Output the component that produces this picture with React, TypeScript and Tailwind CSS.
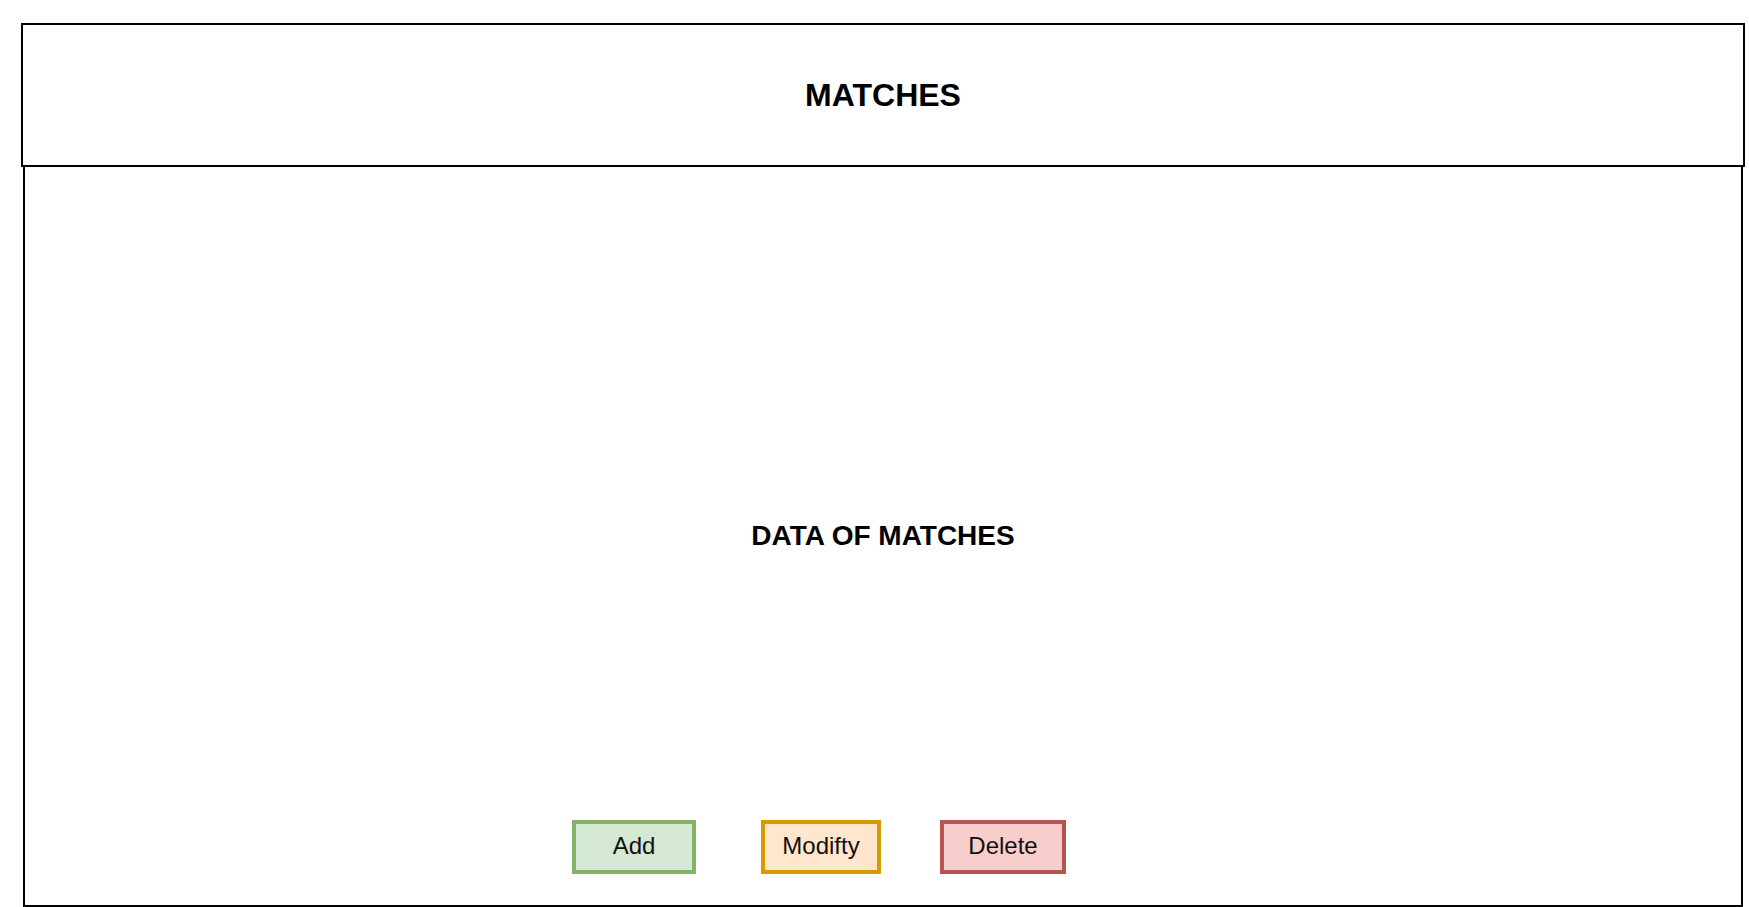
import React from 'react';

const BUTTONS = [
  { label: 'Add', cls: 'w-[124px] bg-[#d5e8d4] border-[#82b366]' },
  { label: 'Modifty', cls: 'w-[120px] bg-[#ffe6cc] border-[#d79b00] ml-[65px]' },
  { label: 'Delete', cls: 'w-[126px] bg-[#f8cecc] border-[#b85450] ml-[59px]' },
];

export default function App() {
  return (
    <div className="w-[1749px] h-[907px] bg-white overflow-hidden font-['Liberation_Sans',Arial,sans-serif] text-black">
      {/* header */}
      <div className="ml-[21px] mt-[23px] w-[1724px] h-[144px] border-2 border-black flex items-center justify-center">
        <h1 className="text-[32px] font-bold leading-none">MATCHES</h1>
      </div>

      {/* body */}
      <div className="ml-[23px] w-[1720px] h-[740px] border-x-2 border-b-2 border-black flex flex-col">
        <div className="flex-1 flex items-center justify-center pt-[85px]">
          <h2 className="text-[28px] font-bold leading-none">DATA OF MATCHES</h2>
        </div>
        <div className="flex pl-[547px] pb-[31px]">
          {BUTTONS.map((b) => (
            <div
              key={b.label}
              className={`h-[54px] border-4 pb-[3px] flex items-center justify-center text-[24px] text-[#111] ${b.cls}`}
            >
              {b.label}
            </div>
          ))}
        </div>
      </div>
    </div>
  );
}
